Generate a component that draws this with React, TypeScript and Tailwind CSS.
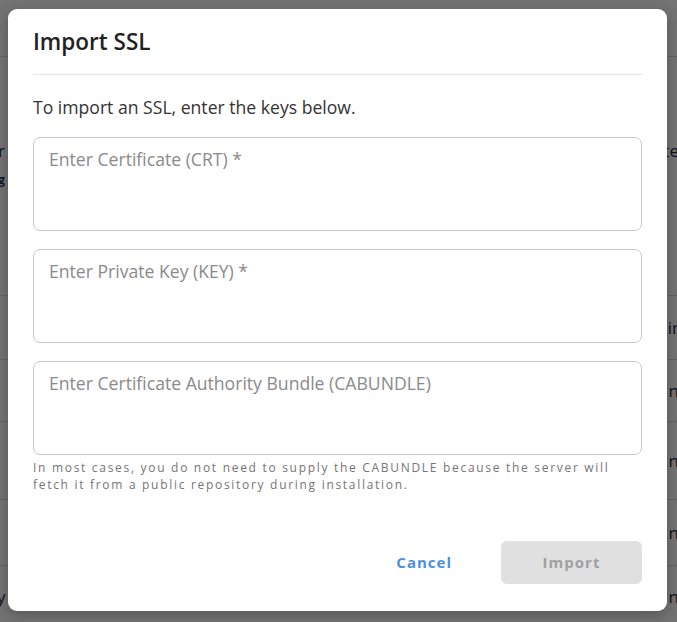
import React from "react";

function BackgroundPage() {
  return (
    <div className="flex flex-col h-[622px] w-[677px] bg-white text-[#1f2a44]">
      <div className="h-[57px] border-b border-[#dcdcdc] bg-white" />
      <div className="h-[239px] border-b border-[#dcdcdc] flex justify-between items-start pt-[84px] text-[17px] leading-5">
        <div className="flex flex-col">
          <span className="-ml-[2px]">r</span>
          <span className="-ml-[2px] mt-[13px] text-[12px] leading-3 font-bold">g</span>
        </div>
        <span className="-mr-[2px]">te</span>
      </div>
      <div className="h-[64px] border-b border-[#dcdcdc] flex justify-end items-center text-[17px]">
        <span className="-mr-[2px]">ir</span>
      </div>
      <div className="h-[62px] border-b border-[#dcdcdc] flex justify-end items-center text-[17px]">
        <span className="-mr-[2px]">n</span>
      </div>
      <div className="h-[78px] border-b border-[#dcdcdc] flex justify-end items-center text-[17px]">
        <span className="-mr-[2px]">n</span>
      </div>
      <div className="h-[66px] border-b border-[#dcdcdc] flex justify-end items-center text-[17px]">
        <span className="-mr-[2px]">n</span>
      </div>
      <div className="h-[56px] flex justify-between items-start pt-[18px] text-[17px]">
        <span className="-ml-[3px]">y</span>
        <span className="-mr-[2px]">n</span>
      </div>
    </div>
  );
}

function KeyField({ placeholder }: { placeholder: string }) {
  return (
    <textarea
      placeholder={placeholder}
      className="block w-full h-[94px] resize-none rounded-[7px] border border-[#c9c9c9] bg-white px-[15px] pt-[9px] pb-[10px] text-[17.6px] leading-[24px] text-[#333] placeholder:text-[#8a8a8a] outline-none"
    />
  );
}

export default function App() {
  return (
    <div
      className="relative h-[622px] w-[677px] overflow-hidden"
      style={{ fontFamily: '"Open Sans", "Noto Sans", sans-serif' }}
    >
      <BackgroundPage />
      <div className="absolute inset-0 bg-black/55" />
      <div className="absolute left-[8px] top-[9px] w-[659px] h-[602px] rounded-[9px] bg-white shadow-[0_4px_14px_rgba(0,0,0,0.25)] px-[25px] pt-[18px] flex flex-col">
        <h2 className="text-[22.5px] leading-[30px] font-semibold text-[#222]">Import SSL</h2>
        <div className="mt-[17px] h-px bg-[#e2e2e2]" />
        <p className="mt-[20px] text-[17.6px] leading-[24px] text-[#333]">
          To import an SSL, enter the keys below.
        </p>
        <div className="mt-[18px] flex flex-col gap-[18px]">
          <KeyField placeholder="Enter Certificate (CRT) *" />
          <KeyField placeholder="Enter Private Key (KEY) *" />
          <div className="flex flex-col">
            <KeyField placeholder="Enter Certificate Authority Bundle (CABUNDLE)" />
            <p className="mt-[4px] text-[12px] leading-[17px] tracking-[1.7px] text-[#757575]">
              In most cases, you do not need to supply the CABUNDLE because the server will fetch it from a public repository during installation.
            </p>
          </div>
        </div>
        <div className="mt-auto mb-[27px] flex items-center justify-end">
          <button className="text-[15px] font-bold tracking-[1px] text-[#4a8fe2] mr-[49px]">
            Cancel
          </button>
          <button className="w-[141px] h-[43px] rounded-[6px] bg-[#e0e0e0] text-[15px] font-bold tracking-[1px] text-[#a0a0a0]">
            Import
          </button>
        </div>
      </div>
    </div>
  );
}
